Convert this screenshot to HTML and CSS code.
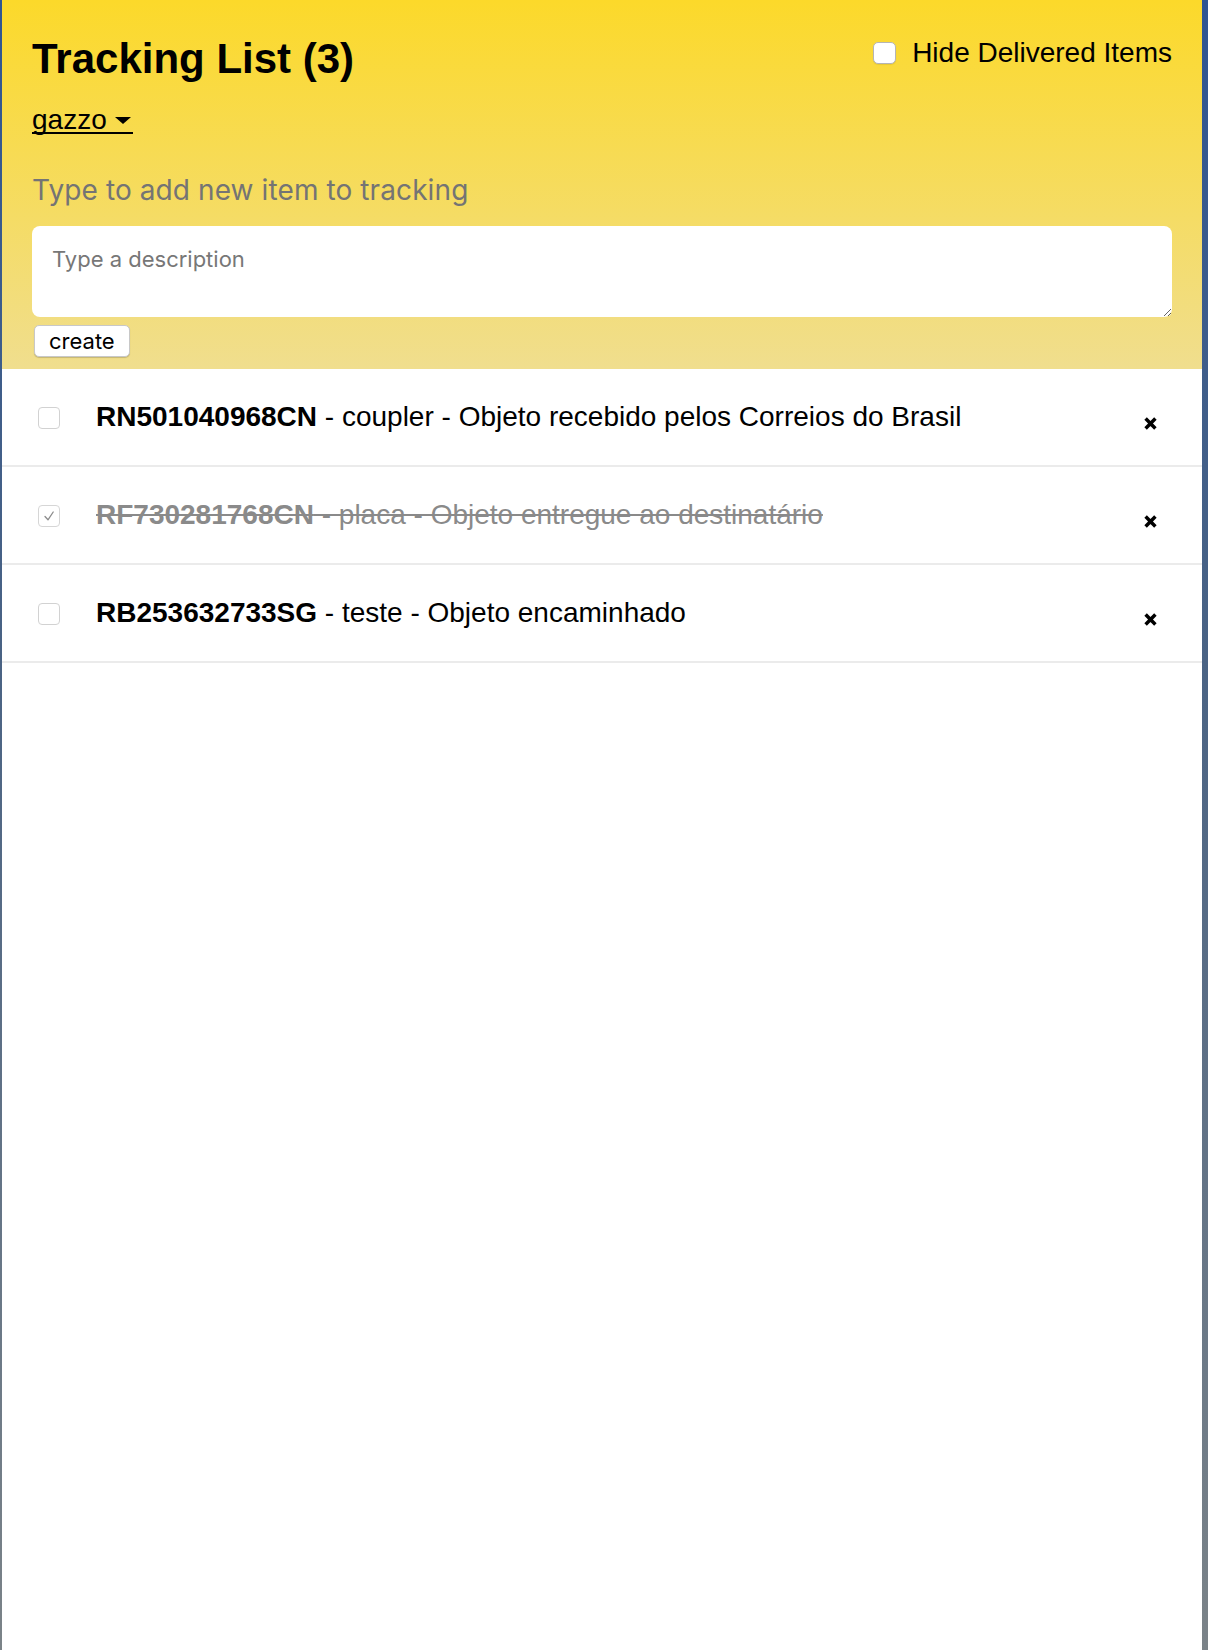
FILE: index.html
```html
<!DOCTYPE html>
<html lang="en">
<head>
<meta charset="utf-8">
<title>Tracking List</title>
<link rel="stylesheet" href="styles.css">
</head>
<body>
<div class="app">
  <header class="top">
    <div class="top-row">
      <div class="title-block">
        <h1 class="title">Tracking List (3)</h1>
        <a class="user" href="#">gazzo <span class="caret"></span></a>
      </div>
      <label class="hide-toggle"><span class="box box-lg"></span>Hide Delivered Items</label>
    </div>
    <h2 class="add-title">Type to add new item to tracking</h2>
    <form class="add-form">
      <textarea class="desc" placeholder="Type a description"></textarea>
      <button type="button" class="create">create</button>
    </form>
  </header>
  <ul class="list">
    <li class="item">
      <span class="box"></span>
      <span class="text"><b>RN501040968CN</b> - coupler - Objeto recebido pelos Correios do Brasil</span>
      <span class="remove"><svg width="13" height="13" viewBox="0 0 13 13"><path d="M1.6 1.6 L11.4 11.4 M11.4 1.6 L1.6 11.4" stroke="#000" stroke-width="3.5" stroke-linecap="butt" fill="none"/></svg></span>
    </li>
    <li class="item delivered">
      <span class="box checked"><svg width="14" height="14" viewBox="0 0 14 14"><path d="M3 7.5 L6 10.8 L11.2 3" stroke="#8c8c8c" stroke-width="1.3" fill="none" stroke-linecap="round" stroke-linejoin="round"/></svg></span>
      <span class="text"><b>RF730281768CN</b> - placa - Objeto entregue ao destinatário</span>
      <span class="remove"><svg width="13" height="13" viewBox="0 0 13 13"><path d="M1.6 1.6 L11.4 11.4 M11.4 1.6 L1.6 11.4" stroke="#000" stroke-width="3.5" stroke-linecap="butt" fill="none"/></svg></span>
    </li>
    <li class="item">
      <span class="box"></span>
      <span class="text"><b>RB253632733SG</b> - teste - Objeto encaminhado</span>
      <span class="remove"><svg width="13" height="13" viewBox="0 0 13 13"><path d="M1.6 1.6 L11.4 11.4 M11.4 1.6 L1.6 11.4" stroke="#000" stroke-width="3.5" stroke-linecap="butt" fill="none"/></svg></span>
    </li>
  </ul>
</div>
</body>
</html>
```

FILE: styles.css
```css
html, body {
  margin: 0;
  padding: 0;
}
body {
  min-height: 1650px;
  background: linear-gradient(to bottom, #2f5592 0%, #4a6384 40%, #7b8388 100%);
  font-family: "Liberation Sans", Arial, Helvetica, sans-serif;
  color: #000;
}
.app {
  margin-left: 2px;
  width: 1200px;
  min-height: 1650px;
  background: #fff;
}
.top {
  background: linear-gradient(to bottom, #fcd92a 0%, #f0de8e 100%);
  padding: 35px 30px 12px 30px;
}
.top-row {
  display: flex;
  justify-content: space-between;
  align-items: flex-start;
}
.title-block {
  display: flex;
  flex-direction: column;
  align-items: flex-start;
}
.title {
  margin: 0;
  font-size: 42px;
  line-height: 48px;
  font-weight: bold;
}
.user {
  display: inline-block;
  margin-top: 21px;
  padding-right: 2px;
  font-size: 28px;
  line-height: 32px;
  color: #000;
  text-decoration: none;
  background-image: linear-gradient(#000, #000);
  background-repeat: no-repeat;
  background-size: 100% 2px;
  background-position: 0 28px;
}
.caret {
  display: inline-block;
  width: 0;
  height: 0;
  border-left: 8px solid transparent;
  border-right: 8px solid transparent;
  border-top: 7px solid #000;
  vertical-align: 5px;
}
.hide-toggle {
  display: flex;
  align-items: center;
  gap: 16px;
  margin-top: 2px;
  font-size: 28px;
  line-height: 32px;
}
.box {
  display: inline-flex;
  align-items: center;
  justify-content: center;
  box-sizing: border-box;
  width: 22px;
  height: 22px;
  border: 1px solid #d2d2d2;
  border-radius: 4px;
  background: #fff;
  flex: none;
}
.box-lg {
  width: 23px;
  height: 22px;
  border-color: #b5b5b5;
  border-radius: 5px;
  box-shadow: 0 1px 1px rgba(0, 0, 0, 0.08);
}
.add-title {
  margin: 37px 0 0 0;
  font-family: Inter, "Noto Sans", sans-serif;
  font-weight: normal;
  font-size: 28px;
  line-height: 34px;
  letter-spacing: 0.1px;
  color: #747474;
}
.add-form {
  margin: 19px 0 0 0;
}
.desc {
  display: block;
  box-sizing: border-box;
  width: 1140px;
  height: 91px;
  padding: 20px;
  border: none;
  border-radius: 8px;
  background: #fff;
  font-family: Inter, "Noto Sans", sans-serif;
  font-size: 22px;
  color: #000;
  resize: vertical;
  outline: none;
}
.desc::placeholder {
  color: #777;
}
.create {
  display: block;
  margin: 8px 0 0 2px;
  box-sizing: border-box;
  height: 32px;
  padding: 0 14px;
  border: 1px solid #c8c8c8;
  border-radius: 5px;
  background: #fff;
  box-shadow: 0 1px 1px rgba(0, 0, 0, 0.18);
  font-family: Inter, "Noto Sans", sans-serif;
  font-size: 22px;
  line-height: 28px;
  color: #000;
}
.list {
  list-style: none;
  margin: 0;
  padding: 0;
}
.item {
  display: flex;
  align-items: center;
  height: 96px;
  padding: 0 45px 0 36px;
  border-bottom: 2px solid #ebebeb;
  font-size: 28px;
  line-height: 32px;
}
.item .box {
  margin-top: 1px;
}
.text {
  flex: 1;
  margin-left: 36px;
}
.delivered .text {
  color: #8a8a8a;
  text-decoration: line-through;
}
.box.checked {
  border-color: #d6d6d6;
}
.remove {
  display: flex;
  margin-top: 12px;
}
```
